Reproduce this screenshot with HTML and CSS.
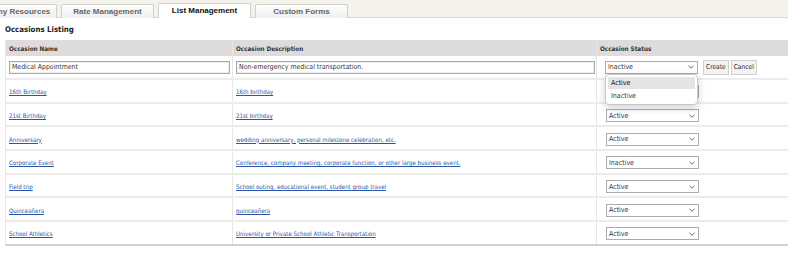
FILE: index.html
```html
<!DOCTYPE html>
<html lang="en">
<head>
  <meta charset="UTF-8" />
  <title>List Management</title>
  <link rel="stylesheet" href="styles.css">
</head>
<body>
<div class="tabBar">
  <div class="tabs">
    <div class="tab">Company Resources</div>
    <div class="tab">Rate Management</div>
    <div class="tab active">List Management</div>
    <div class="tab">Custom Forms</div>
  </div>
</div>

<div class="listing">
  <h3>Occasions Listing</h3>
  <table class="grid">
    <colgroup>
      <col class="colName">
      <col class="colDesc">
      <col class="colStatus">
    </colgroup>
    <thead>
      <tr>
        <th>Occasion Name</th>
        <th>Occasion Description</th>
        <th>Occasion Status</th>
      </tr>
    </thead>
    <tbody>
      <tr class="editRow">
        <td><input class="textField nameField" type="text" value="Medical Appointment" spellcheck="false" /></td>
        <td><input class="textField descField" type="text" value="Non-emergency medical transportation." spellcheck="false" /></td>
        <td>
          <div class="statusCell">
            <span class="selectBox focused">Inactive
              <svg class="chevron" viewBox="0 0 6 4" width="6" height="4"><path d="M0.5 0.8 L3 3.2 L5.5 0.8" fill="none" stroke="#555" stroke-width="0.9"/></svg>
            </span>
            <button class="rowBtn">Create</button>
            <button class="rowBtn">Cancel</button>
            <ul class="dropList">
              <li class="hover">Active</li>
              <li>Inactive</li>
            </ul>
          </div>
        </td>
      </tr>
      <tr>
        <td><a href="#">16th Birthday</a></td>
        <td><a href="#">16th birthday</a></td>
        <td><div class="statusCell"><span class="selectBox">Active<svg class="chevron" viewBox="0 0 6 4" width="6" height="4"><path d="M0.5 0.8 L3 3.2 L5.5 0.8" fill="none" stroke="#555" stroke-width="0.9"/></svg></span></div></td>
      </tr>
      <tr>
        <td><a href="#">21st Birthday</a></td>
        <td><a href="#">21st birthday</a></td>
        <td><div class="statusCell"><span class="selectBox">Active<svg class="chevron" viewBox="0 0 6 4" width="6" height="4"><path d="M0.5 0.8 L3 3.2 L5.5 0.8" fill="none" stroke="#555" stroke-width="0.9"/></svg></span></div></td>
      </tr>
      <tr>
        <td><a href="#">Anniversary</a></td>
        <td><a href="#">wedding anniversary, personal milestone celebration, etc.</a></td>
        <td><div class="statusCell"><span class="selectBox">Active<svg class="chevron" viewBox="0 0 6 4" width="6" height="4"><path d="M0.5 0.8 L3 3.2 L5.5 0.8" fill="none" stroke="#555" stroke-width="0.9"/></svg></span></div></td>
      </tr>
      <tr>
        <td><a href="#">Corporate Event</a></td>
        <td><a href="#">Conference, company meeting, corporate function, or other large business event.</a></td>
        <td><div class="statusCell"><span class="selectBox">Inactive<svg class="chevron" viewBox="0 0 6 4" width="6" height="4"><path d="M0.5 0.8 L3 3.2 L5.5 0.8" fill="none" stroke="#555" stroke-width="0.9"/></svg></span></div></td>
      </tr>
      <tr>
        <td><a href="#">Field trip</a></td>
        <td><a href="#">School outing, educational event, student group travel</a></td>
        <td><div class="statusCell"><span class="selectBox">Active<svg class="chevron" viewBox="0 0 6 4" width="6" height="4"><path d="M0.5 0.8 L3 3.2 L5.5 0.8" fill="none" stroke="#555" stroke-width="0.9"/></svg></span></div></td>
      </tr>
      <tr>
        <td><a href="#">Quinceañera</a></td>
        <td><a href="#">quinceañera</a></td>
        <td><div class="statusCell"><span class="selectBox">Active<svg class="chevron" viewBox="0 0 6 4" width="6" height="4"><path d="M0.5 0.8 L3 3.2 L5.5 0.8" fill="none" stroke="#555" stroke-width="0.9"/></svg></span></div></td>
      </tr>
      <tr>
        <td><a href="#">School Athletics</a></td>
        <td><a href="#">University or Private School Athletic Transportation</a></td>
        <td><div class="statusCell"><span class="selectBox">Active<svg class="chevron" viewBox="0 0 6 4" width="6" height="4"><path d="M0.5 0.8 L3 3.2 L5.5 0.8" fill="none" stroke="#555" stroke-width="0.9"/></svg></span></div></td>
      </tr>
    </tbody>
  </table>
</div>
</body>
</html>
```

FILE: styles.css
```css
* { margin: 0; padding: 0; box-sizing: border-box; }
html, body {
  background-color: #fff;
  color: #333;
  font-family: "DejaVu Sans Condensed", "DejaVu Sans", sans-serif;
  overflow: hidden;
}
.tabBar {
  height: 18px;
  background-color: #f5f2eb;
  border-bottom: 1px solid #dcd8d0;
}
.tabs {
  display: flex;
  align-items: flex-end;
  gap: 4px;
  height: 100%;
  margin-left: -36px;
}
.tab {
  width: 93px;
  height: 14px;
  font-family: "Liberation Sans", Arial, sans-serif;
  font-size: 8px;
  font-weight: bold;
  color: #666;
  text-align: center;
  line-height: 13px;
  background: linear-gradient(#fdfdfc, #efefef);
  border: 1px solid #d0d0d0;
  border-bottom: none;
  border-radius: 2px 2px 0 0;
  margin-bottom: -1px;
}
.tab.active {
  color: #111;
  background: #fff;
  height: 15px;
  line-height: 14px;
}
.listing {
  padding: 7px 0 0 5px;
}
.listing h3 {
  font-size: 7.8px;
  font-weight: bold;
  color: #222;
  margin-bottom: 6px;
}
.grid {
  width: 790px;
  table-layout: fixed;
  border-collapse: collapse;
  border-left: 1px solid #d6d6d6;
  border-bottom: 2px solid #d2d2d2;
}
.colName { width: 227px; }
.colDesc { width: 364px; }
.grid th {
  height: 16px;
  background-color: #dfdbdb;
  font-size: 6.3px;
  font-weight: bold;
  color: #333;
  text-align: left;
  padding: 0 3px;
  border-left: 1px solid #e9e6e6;
}
.grid td {
  height: 23.7px;
  padding: 2px 3px 0;
  font-size: 6.1px;
  border-top: 2px solid #ececec;
  border-left: 1px solid #e6e6e6;
  vertical-align: middle;
}
.grid tr.editRow td {
  height: 23px;
  padding-top: 0;
  border-top: none;
}
.grid a {
  color: #2a55a8;
}
.textField {
  display: block;
  height: 13px;
  font-family: inherit;
  font-size: 6.9px;
  color: #333;
  padding: 0 2px;
  border: 1px solid #a9a9a9;
  box-shadow: inset 0 0 0 1px #eee;
}
.nameField { width: 221px; }
.descField { width: 359px; }
.statusCell {
  position: relative;
  display: flex;
  align-items: center;
  gap: 2px;
  padding-left: 6px;
}
.selectBox {
  display: flex;
  align-items: center;
  justify-content: space-between;
  width: 93px;
  height: 13px;
  padding: 0 3px 0 2px;
  font-size: 7px;
  color: #333;
  background: #fff;
  border: 1px solid #acacac;
}
.selectBox.focused {
  border-color: #8fb0d8;
  margin-left: -1px;
  margin-right: 3px;
}
.rowBtn {
  height: 15px;
  padding: 0 2px;
  font-family: inherit;
  font-size: 6.6px;
  color: #222;
  background-color: #f3f3f3;
  border: 1px solid #cfcfcf;
}
.dropList {
  position: absolute;
  left: 5px;
  top: 14px;
  width: 93px;
  list-style: none;
  background: #fff;
  border: 1px solid #c8c8c8;
  border-radius: 4px;
  box-shadow: 0 3px 8px rgba(0, 0, 0, 0.18);
  padding: 2px 2px 2px;
  z-index: 2;
}
.dropList li {
  height: 12px;
  line-height: 12px;
  padding-left: 3px;
  font-size: 7px;
  color: #333;
}
.dropList li.hover {
  background-color: #e4e4e4;
  color: #111;
  margin-bottom: 1px;
}
```
